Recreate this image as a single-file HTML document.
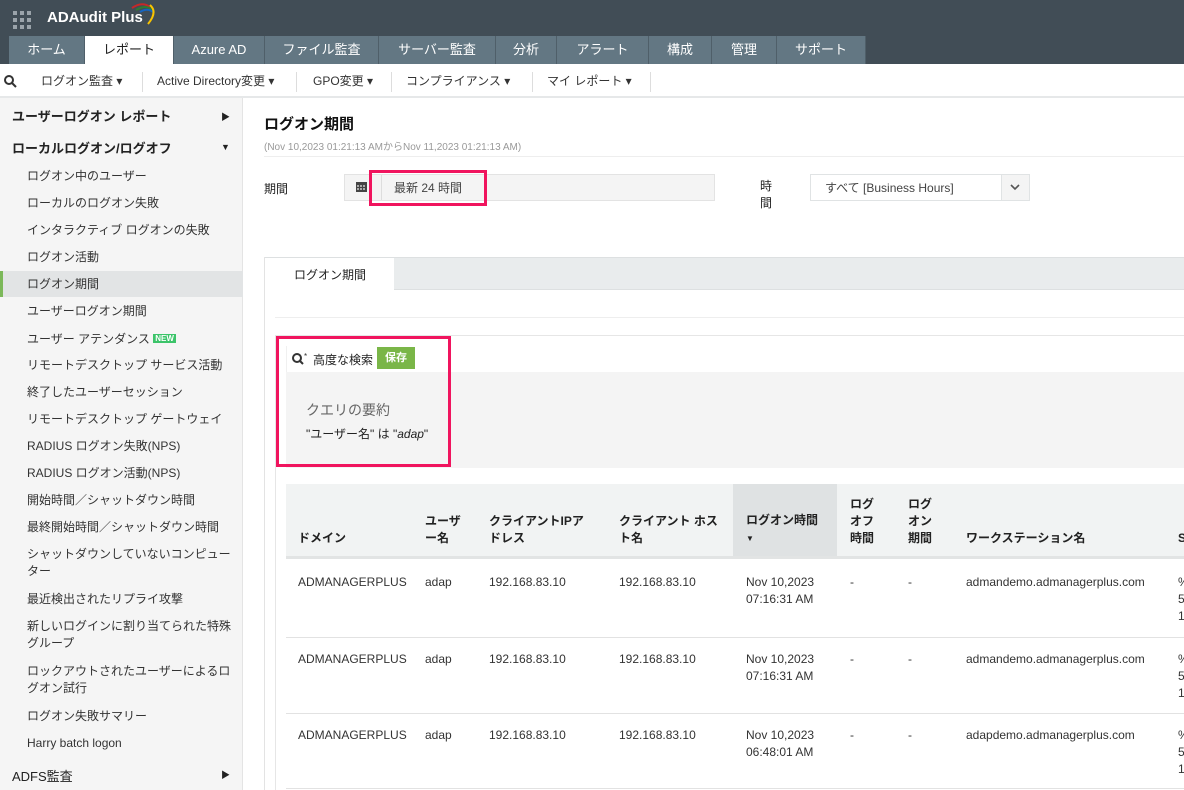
<!DOCTYPE html>
<html><head><meta charset="utf-8">
<style>
*{margin:0;padding:0;box-sizing:border-box}
body{width:1184px;height:790px;overflow:hidden;position:relative;background:#fff;font-family:"Liberation Sans","Noto Sans CJK JP",sans-serif;font-size:12px;color:#222}
.a{position:absolute;white-space:nowrap}
#top{left:0;top:0;width:1184px;height:64px;background:#414d56}
.tab{position:absolute;top:36px;height:28px;background:#637783;color:#fff;font-size:13px;line-height:28px;text-align:center;border-right:1px solid #4f5f69}
#sub{left:0;top:64px;width:1184px;height:34px;background:#fff;border-bottom:2px solid #e6e8e9}
.sm{position:absolute;top:64px;height:34px;line-height:34px;font-size:12px;color:#333}
.sep{position:absolute;top:72px;width:1px;height:20px;background:#ddd}
#side{left:0;top:98px;width:243px;height:692px;background:#f5f5f5;border-right:1px solid #e4e4e4}
.si{position:absolute;left:27px;font-size:12px;color:#333;line-height:17px}
.sh{position:absolute;left:12px;font-size:13px;font-weight:bold;color:#222}
.tri{position:absolute;left:221px;font-size:9px;color:#222}
.th{position:absolute;font-size:12px;font-weight:bold;color:#222;line-height:17px}
.td{position:absolute;font-size:12px;color:#333;line-height:17px}
.pink{position:absolute;border:3px solid #f0145e}
</style></head><body>
<div id="top" class="a"></div>
<svg class="a" style="left:12px;top:10px" width="22" height="22"><g fill="#9aa3aa"><rect x="1" y="1" width="4" height="4"/><rect x="8" y="1" width="4" height="4"/><rect x="15" y="1" width="4" height="4"/><rect x="1" y="8" width="4" height="4"/><rect x="8" y="8" width="4" height="4"/><rect x="15" y="8" width="4" height="4"/><rect x="1" y="15" width="4" height="4"/><rect x="8" y="15" width="4" height="4"/><rect x="15" y="15" width="4" height="4"/></g></svg>
<div class="a" style="left:47px;top:9px;color:#fff;font-size:15px;font-weight:bold">ADAudit Plus</div>
<svg class="a" style="left:128px;top:2px" width="30" height="24"><path d="M4 6 Q14 -1 22 5" stroke="#c62828" stroke-width="2" fill="none"/><path d="M8 8 Q18 2 24 8" stroke="#2e7d32" stroke-width="2" fill="none"/><path d="M12 10 Q20 5 26 11" stroke="#1565c0" stroke-width="2" fill="none"/><path d="M22 3 Q30 10 20 22" stroke="#f9c400" stroke-width="2" fill="none"/></svg>
<div class="tab" style="left:9px;width:76px">ホーム</div>
<div class="tab" style="left:85px;width:89px;background:#fff;color:#222">レポート</div>
<div class="tab" style="left:174px;width:91px">Azure AD</div>
<div class="tab" style="left:265px;width:114px">ファイル監査</div>
<div class="tab" style="left:379px;width:117px">サーバー監査</div>
<div class="tab" style="left:496px;width:61px">分析</div>
<div class="tab" style="left:557px;width:92px">アラート</div>
<div class="tab" style="left:649px;width:63px">構成</div>
<div class="tab" style="left:712px;width:65px">管理</div>
<div class="tab" style="left:777px;width:89px">サポート</div>
<div id="sub" class="a"></div>
<svg class="a" style="left:3px;top:74px" width="16" height="14"><circle cx="6" cy="6" r="4" stroke="#333" stroke-width="2" fill="none"/><path d="M9 9 L13 13" stroke="#333" stroke-width="2"/></svg>
<div class="sm" style="left:41px">ログオン監査 ▾</div>
<div class="sep" style="left:142px"></div>
<div class="sm" style="left:157px">Active Directory変更 ▾</div>
<div class="sep" style="left:296px"></div>
<div class="sm" style="left:313px">GPO変更 ▾</div>
<div class="sep" style="left:391px"></div>
<div class="sm" style="left:406px">コンプライアンス ▾</div>
<div class="sep" style="left:532px"></div>
<div class="sm" style="left:547px">マイ レポート ▾</div>
<div class="sep" style="left:650px"></div>

<div id="side" class="a"></div>
<div class="sh" style="top:106px">ユーザーログオン レポート</div><div class="tri" style="top:110px">▶</div>
<div class="sh" style="top:138px">ローカルログオン/ログオフ</div><div class="tri" style="top:142px">▼</div>
<div class="a" style="left:0;top:271px;width:243px;height:26px;background:#e2e4e5;border-left:3px solid #7cb85a"></div>
<div class="si" style="top:168px">ログオン中のユーザー</div>
<div class="si" style="top:195px">ローカルのログオン失敗</div>
<div class="si" style="top:222px">インタラクティブ ログオンの失敗</div>
<div class="si" style="top:249px">ログオン活動</div>
<div class="si" style="top:276px">ログオン期間</div>
<div class="si" style="top:303px">ユーザーログオン期間</div>
<div class="si" style="top:330px">ユーザー アテンダンス <span style="background:#3cc46a;color:#fff;font-size:8px;font-weight:bold;padding:0 2px;vertical-align:2px">NEW</span></div>
<div class="si" style="top:357px">リモートデスクトップ サービス活動</div>
<div class="si" style="top:384px">終了したユーザーセッション</div>
<div class="si" style="top:411px">リモートデスクトップ ゲートウェイ</div>
<div class="si" style="top:438px">RADIUS ログオン失敗(NPS)</div>
<div class="si" style="top:465px">RADIUS ログオン活動(NPS)</div>
<div class="si" style="top:492px">開始時間／シャットダウン時間</div>
<div class="si" style="top:519px">最終開始時間／シャットダウン時間</div>
<div class="si" style="top:546px">シャットダウンしていないコンピュー<br>ター</div>
<div class="si" style="top:591px">最近検出されたリプライ攻撃</div>
<div class="si" style="top:618px">新しいログインに割り当てられた特殊<br>グループ</div>
<div class="si" style="top:663px">ロックアウトされたユーザーによるロ<br>グオン試行</div>
<div class="si" style="top:708px">ログオン失敗サマリー</div>
<div class="si" style="top:735px">Harry batch logon</div>
<div class="sh" style="top:766px;font-weight:normal;color:#222">ADFS監査</div><div class="tri" style="top:768px">▶</div>

<div class="a" style="left:264px;top:113px;font-size:15px;font-weight:bold;color:#111">ログオン期間</div>
<div class="a" style="left:264px;top:138px;font-size:10px;color:#999">(Nov 10,2023 01:21:13 AMからNov 11,2023 01:21:13 AM)</div>
<div class="a" style="left:264px;top:156px;width:920px;height:1px;background:#eee"></div>
<div class="a" style="left:264px;top:180px;font-size:12px">期間</div>
<div class="a" style="left:344px;top:174px;width:371px;height:27px;background:#f4f4f4;border:1px solid #e3e3e3"></div>
<div class="a" style="left:381px;top:175px;width:1px;height:25px;background:#ddd"></div>
<svg class="a" style="left:356px;top:181px" width="11" height="11"><rect x="0" y="1" width="11" height="10" fill="#444"/><g fill="#aaa"><rect x="1" y="4" width="2" height="2"/><rect x="4" y="4" width="2" height="2"/><rect x="7" y="4" width="2" height="2"/><rect x="1" y="7" width="2" height="2"/><rect x="4" y="7" width="2" height="2"/><rect x="7" y="7" width="2" height="2"/></g></svg>
<div class="a" style="left:394px;top:179px;font-size:12px;color:#444">最新 24 時間</div>
<div class="pink" style="left:369px;top:170px;width:118px;height:36px"></div>
<div class="a" style="left:760px;top:178px;font-size:12px;line-height:17px">時<br>間</div>
<div class="a" style="left:810px;top:174px;width:220px;height:27px;border:1px solid #e0e3e4;background:#fff"></div>
<div class="a" style="left:1001px;top:175px;width:28px;height:25px;background:#f4f4f4;border-left:1px solid #e0e3e4"></div>
<svg class="a" style="left:1010px;top:184px" width="10" height="7"><path d="M1 1 L5 5 L9 1" stroke="#555" stroke-width="1.6" fill="none"/></svg>
<div class="a" style="left:825px;top:179px;font-size:12px;color:#444">すべて [Business Hours]</div>

<div class="a" style="left:264px;top:257px;width:920px;height:33px;background:#e9eced;border-top:1px solid #dde0e1;border-bottom:1px solid #dde0e1"></div>
<div class="a" style="left:265px;top:258px;width:129px;height:32px;background:#fff"></div>
<div class="a" style="left:294px;top:266px;font-size:12px">ログオン期間</div>
<div class="a" style="left:264px;top:257px;width:1px;height:533px;background:#e3e3e3"></div>
<div class="a" style="left:275px;top:317px;width:909px;height:1px;background:#eee"></div>
<div class="a" style="left:275px;top:335px;width:909px;height:1px;background:#e6e6e6"></div>
<div class="a" style="left:275px;top:335px;width:1px;height:455px;background:#e6e6e6"></div>
<div class="a" style="left:286px;top:372px;width:898px;height:96px;background:#f4f4f4"></div>
<div class="a" style="left:286px;top:346px;width:1px;height:26px;background:#f0f0f0"></div>
<svg class="a" style="left:291px;top:352px" width="18" height="14"><circle cx="6" cy="6" r="4" stroke="#333" stroke-width="2" fill="none"/><path d="M9 9 L12 12" stroke="#333" stroke-width="2"/><text x="13" y="7" font-size="8" fill="#333">*</text></svg>
<div class="a" style="left:313px;top:351px;font-size:12px">高度な検索</div>
<div class="a" style="left:377px;top:347px;width:38px;height:22px;background:#7ab648;color:#fff;font-size:11px;font-weight:bold;text-align:center;line-height:22px">保存</div>
<div class="a" style="left:306px;top:400px;font-size:14px;color:#666">クエリの要約</div>
<div class="a" style="left:306px;top:425px;font-size:12px">"ユーザー名" は "<i>adap</i>"</div>
<div class="pink" style="left:276px;top:336px;width:175px;height:131px"></div>

<div class="a" style="left:286px;top:484px;width:898px;height:75px;background:#f1f3f3;border-bottom:3px solid #e2e4e4"></div>
<div class="a" style="left:733px;top:484px;width:104px;height:72px;background:#dfe2e3"></div>
<div class="th" style="left:298px;top:530px">ドメイン</div>
<div class="th" style="left:425px;top:513px">ユーザ<br>ー名</div>
<div class="th" style="left:489px;top:513px">クライアントIPア<br>ドレス</div>
<div class="th" style="left:619px;top:513px">クライアント ホス<br>ト名</div>
<div class="th" style="left:746px;top:512px">ログオン時間<br><span style="font-size:8px">▼</span></div>
<div class="th" style="left:850px;top:496px">ログ<br>オフ<br>時間</div>
<div class="th" style="left:908px;top:496px">ログ<br>オン<br>期間</div>
<div class="th" style="left:966px;top:530px">ワークステーション名</div>
<div class="th" style="left:1178px;top:530px">S</div>

<div class="a" style="left:286px;top:637px;width:898px;height:1px;background:#e2e2e2"></div>
<div class="a" style="left:286px;top:713px;width:898px;height:1px;background:#e2e2e2"></div>
<div class="a" style="left:286px;top:788px;width:898px;height:1px;background:#e2e2e2"></div>

<div class="td" style="left:298px;top:574px">ADMANAGERPLUS</div><div class="td" style="left:425px;top:574px">adap</div><div class="td" style="left:489px;top:574px">192.168.83.10</div><div class="td" style="left:619px;top:574px">192.168.83.10</div><div class="td" style="left:746px;top:574px">Nov 10,2023<br>07:16:31 AM</div><div class="td" style="left:850px;top:574px">-</div><div class="td" style="left:908px;top:574px">-</div><div class="td" style="left:966px;top:574px">admandemo.admanagerplus.com</div><div class="td" style="left:1178px;top:574px">%<br>5<br>1</div>
<div class="td" style="left:298px;top:651px">ADMANAGERPLUS</div><div class="td" style="left:425px;top:651px">adap</div><div class="td" style="left:489px;top:651px">192.168.83.10</div><div class="td" style="left:619px;top:651px">192.168.83.10</div><div class="td" style="left:746px;top:651px">Nov 10,2023<br>07:16:31 AM</div><div class="td" style="left:850px;top:651px">-</div><div class="td" style="left:908px;top:651px">-</div><div class="td" style="left:966px;top:651px">admandemo.admanagerplus.com</div><div class="td" style="left:1178px;top:651px">%<br>5<br>1</div>
<div class="td" style="left:298px;top:727px">ADMANAGERPLUS</div><div class="td" style="left:425px;top:727px">adap</div><div class="td" style="left:489px;top:727px">192.168.83.10</div><div class="td" style="left:619px;top:727px">192.168.83.10</div><div class="td" style="left:746px;top:727px">Nov 10,2023<br>06:48:01 AM</div><div class="td" style="left:850px;top:727px">-</div><div class="td" style="left:908px;top:727px">-</div><div class="td" style="left:966px;top:727px">adapdemo.admanagerplus.com</div><div class="td" style="left:1178px;top:727px">%<br>5<br>1</div>
</body></html>
